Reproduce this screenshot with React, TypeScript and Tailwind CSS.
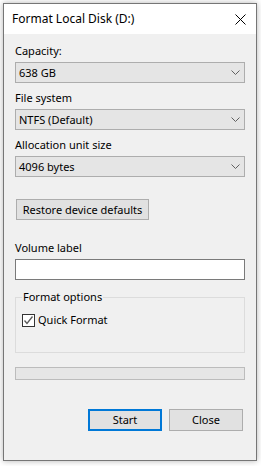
import React from "react";

const font = { fontFamily: '"Segoe UI", "Noto Sans", sans-serif' };

function Chevron() {
  return (
    <svg width="9" height="5" viewBox="0 0 9 5" className="block">
      <path d="M0.5 0.5 L4.5 4.5 L8.5 0.5" fill="none" stroke="#606060" strokeWidth="1" />
    </svg>
  );
}

function Combo({ value }: { value: string }) {
  return (
    <div className="h-[21px] w-[230px] border border-[#adadad] bg-[#e5e5e5] flex items-center pl-[3px] pr-[4px]">
      <span className="flex-1 leading-4 text-black">{value}</span>
      <Chevron />
    </div>
  );
}

function Label({ text }: { text: string }) {
  return <div className="h-4 leading-4 mb-[3px] text-black">{text}</div>;
}

export default function App() {
  return (
    <div className="w-[261px] h-[466px] bg-white pt-[3px] pl-[3px]" style={font}>
      <div className="w-[254px] h-[458px] border border-[#767676] bg-[#f0f0f0] flex flex-col text-[11px] shadow-[0_0_6px_rgba(0,0,0,0.3)]">
        <div className="h-[30px] bg-white flex items-center pl-[8px] pr-[10px] shrink-0">
          <span className="flex-1 text-black text-[12px] leading-4">Format Local Disk (D:)</span>
          <svg width="11" height="11" viewBox="0 0 11 11">
            <path d="M0.5 0.5 L10.5 10.5 M10.5 0.5 L0.5 10.5" stroke="#000" strokeWidth="1" fill="none" />
          </svg>
        </div>
        <div className="flex flex-col pl-[11px] pt-[9px]">
          <Label text="Capacity:" />
          <Combo value="638 GB" />
          <div className="h-[7px]" />
          <Label text="File system" />
          <Combo value="NTFS (Default)" />
          <div className="h-[7px]" />
          <Label text="Allocation unit size" />
          <Combo value="4096 bytes" />
          <button className="mt-[22px] ml-[1px] w-[133px] h-[21px] border border-[#adadad] bg-[#e1e1e1] text-black leading-4 flex items-center justify-center">
            Restore device defaults
          </button>
          <div className="h-[20px]" />
          <Label text="Volume label" />
          <div className="h-[21px] w-[230px] border border-[#7a7a7a] bg-white" />
          <fieldset className="mt-[9px] w-[230px] h-[64px] border border-[#dcdcdc] px-0 pt-0 m-0 min-w-0">
            <legend className="ml-[6px] px-[1px] leading-4 text-black">Format options</legend>
            <div className="flex items-center mt-[7px] ml-[6px]">
              <div className="w-[13px] h-[13px] border border-[#333333] bg-white flex items-center justify-center">
                <svg width="11" height="11" viewBox="0 0 11 11">
                  <path d="M1.5 5.5 L4 8.5 L9.5 1.5" fill="none" stroke="#5a5a5a" strokeWidth="1.3" />
                </svg>
              </div>
              <span className="ml-[3px] leading-4 text-black">Quick Format</span>
            </div>
          </fieldset>
          <div className="mt-[14px] w-[230px] h-[13px] border border-[#bcbcbc] bg-[#e6e6e6]" />
          <div className="mt-[29px] w-[228px] flex justify-end gap-[7px]">
            <button className="w-[74px] h-[22px] border-2 border-[#0078d7] bg-[#e1e1e1] text-black leading-4 flex items-center justify-center">
              Start
            </button>
            <button className="w-[74px] h-[22px] border border-[#adadad] bg-[#e1e1e1] text-black leading-4 flex items-center justify-center">
              Close
            </button>
          </div>
        </div>
      </div>
    </div>
  );
}
